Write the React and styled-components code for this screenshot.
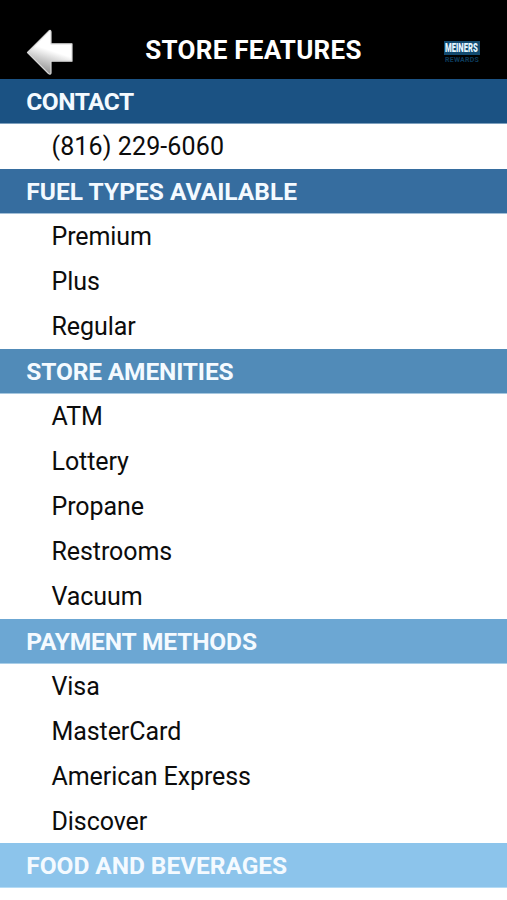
import React from "react";
import styled, { createGlobalStyle } from "styled-components";

const GlobalStyle = createGlobalStyle`
  body {
    margin: 0;
    background: #ffffff;
  }
`;

const Wrapper = styled.div`
  width: 100%;
  height: 900px;
  overflow: hidden;
  background: #ffffff;
  font-family: Roboto, sans-serif;
`;

const Header = styled.header`
  display: grid;
  grid-template-columns: 84px 1fr 84px;
  box-sizing: border-box;
  height: 79px;
  padding-top: 22px;
  background: #000000;
`;

const BackButton = styled.button`
  display: flex;
  padding: 4px 0 0 22px;
  border: 0;
  background: none;
  cursor: pointer;
`;

const Title = styled.h1`
  margin: 0;
  color: #ffffff;
  font-size: 26px;
  font-weight: 700;
  letter-spacing: 0.25px;
  line-height: 57px;
  text-align: center;
  white-space: nowrap;
`;

const Logo = styled.div`
  display: flex;
  flex-direction: column;
  align-items: center;
  width: 36px;
  margin: 19px 0 0 21px;
  font-weight: 700;
  white-space: nowrap;
`;

const LogoName = styled.div`
  width: 36px;
  height: 14px;
  background: #124a70;
  color: #e4f5ff;
  font-size: 12px;
  font-weight: 900;
  line-height: 14px;

  span {
    display: block;
    width: 54px;
    transform: scaleX(0.64);
    transform-origin: 0 50%;
    margin-left: 1px;
  }
`;

const LogoTag = styled.div`
  height: 8px;
  margin-top: 1px;
  color: #0c3b5c;
  font-size: 7px;
  letter-spacing: 0.2px;
  line-height: 8px;
`;

const SectionTitle = styled.h2`
  box-sizing: border-box;
  height: 44.97px;
  margin: 0;
  padding-left: 26.3px;
  border-bottom: 1px solid ${({ $line }) => $line};
  background: ${({ $color }) => $color};
  color: #f4faff;
  font-size: 24.5px;
  font-weight: 700;
  letter-spacing: ${({ $spacing }) => $spacing}px;
  line-height: 45px;
  white-space: nowrap;
`;

const Item = styled.div`
  height: 44.97px;
  padding-left: 51.5px;
  color: #0c0c0c;
  font-size: 25px;
  letter-spacing: ${({ $spacing }) => $spacing}px;
  line-height: 45px;
  white-space: nowrap;
`;

const sections = [
  {
    title: "CONTACT",
    color: "#1b5283",
    line: "#7d9fbd",
    spacing: -0.5,
    items: ["(816) 229-6060"],
    itemSpacing: 0.12,
  },
  {
    title: "FUEL TYPES AVAILABLE",
    color: "#366d9f",
    line: "#a3bfd7",
    spacing: 0.03,
    items: ["Premium", "Plus", "Regular"],
  },
  {
    title: "STORE AMENITIES",
    color: "#518bb8",
    line: "#a6c7df",
    spacing: -0.15,
    items: ["ATM", "Lottery", "Propane", "Restrooms", "Vacuum"],
  },
  {
    title: "PAYMENT METHODS",
    color: "#6ca7d3",
    line: "#a9cee8",
    spacing: -0.13,
    items: ["Visa", "MasterCard", "American Express", "Discover"],
  },
  {
    title: "FOOD AND BEVERAGES",
    color: "#8cc4eb",
    line: "#b4dbf5",
    spacing: -0.05,
    items: [],
  },
];

const ArrowIcon = () => (
  <svg width="54" height="53" viewBox="0 0 54 53">
    <defs>
      <linearGradient id="arrow" x1="0.3" y1="0.95" x2="0.5" y2="0.35">
        <stop offset="0" stopColor="#8f8f8f" />
        <stop offset="0.5" stopColor="#d0d0d0" />
        <stop offset="0.85" stopColor="#ffffff" />
      </linearGradient>
    </defs>
    <path
      d="M5.5 26.5 L27 4.8 Q28.8 3.8 29 5.8 V17.8 H50 V35.2 H29 V47 Q28.5 49 26.5 47.5 Z"
      fill="url(#arrow)"
      stroke="#d8d8d8"
      strokeWidth="1.2"
      strokeLinejoin="round"
    />
  </svg>
);

const App = () => {
  return (
    <Wrapper>
      <GlobalStyle />
      <Header>
        <BackButton aria-label="Back">
          <ArrowIcon />
        </BackButton>
        <Title>STORE FEATURES</Title>
        <Logo>
          <LogoName>
            <span>MEINERS</span>
          </LogoName>
          <LogoTag>REWARDS</LogoTag>
        </Logo>
      </Header>
      {sections.map(({ title, color, line, spacing, items, itemSpacing }) => (
        <section key={title}>
          <SectionTitle $color={color} $line={line} $spacing={spacing}>
            {title}
          </SectionTitle>
          {items.map((item) => (
            <Item key={item} $spacing={itemSpacing ?? -0.08}>
              {item}
            </Item>
          ))}
        </section>
      ))}
    </Wrapper>
  );
};

export default App;
